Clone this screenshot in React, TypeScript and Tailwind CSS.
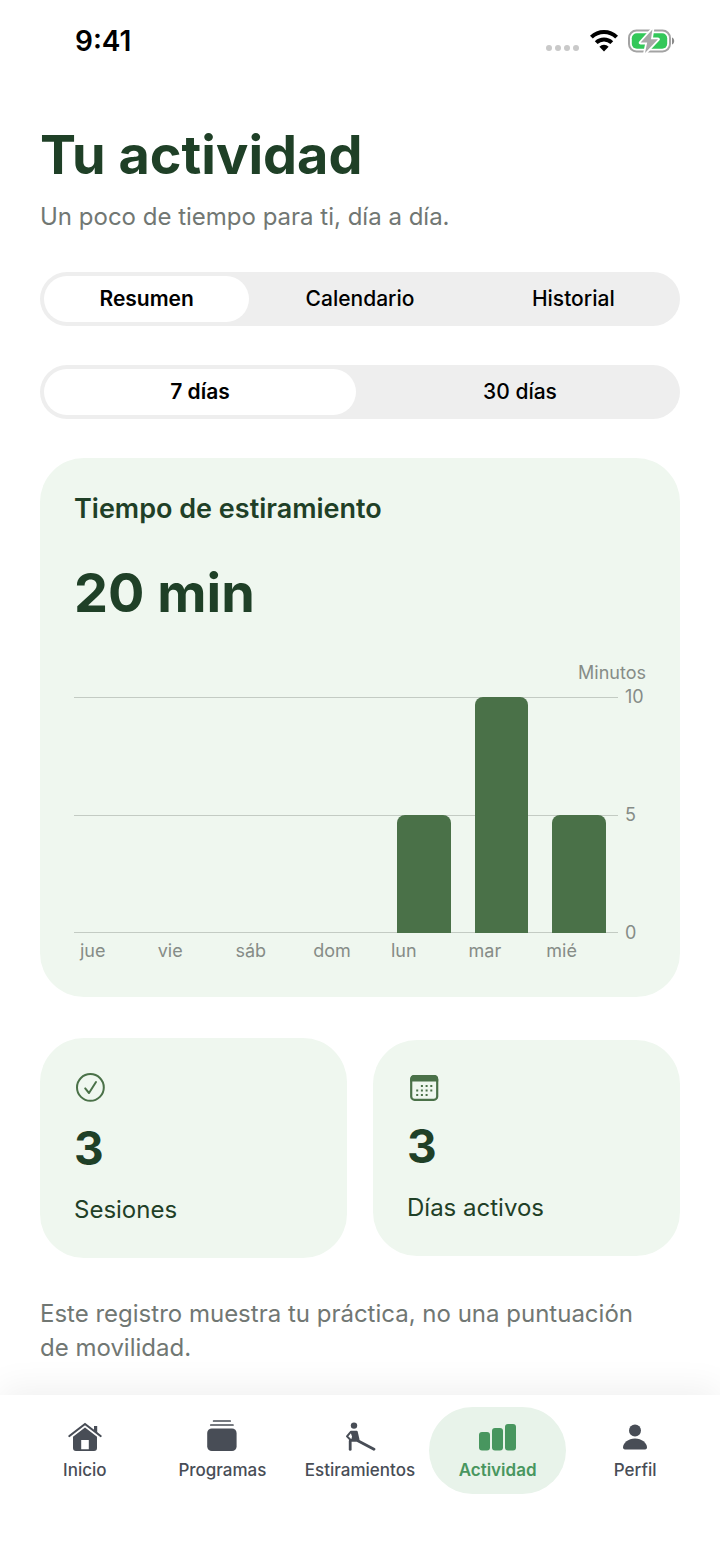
import { useState, type ReactNode } from "react";

const week = [
  { day: "jue", minutes: 0 },
  { day: "vie", minutes: 0 },
  { day: "sáb", minutes: 0 },
  { day: "dom", minutes: 0 },
  { day: "lun", minutes: 5 },
  { day: "mar", minutes: 10 },
  { day: "mié", minutes: 5 },
];

const ticks = [10, 5, 0];
const maxMinutes = 10;

function StatusBar() {
  return (
    <div className="flex h-[82px] items-center justify-between pl-[75px] pr-11">
      <span className="text-[28px] font-semibold leading-8 text-black">9:41</span>
      <div className="flex items-center gap-2">
        <svg width="36" height="24" viewBox="0 0 36 24" fill="#c9c9c9" aria-hidden="true">
          <circle cx="3" cy="19" r="3" />
          <circle cx="12" cy="19" r="3" />
          <circle cx="21" cy="19" r="3" />
          <circle cx="30" cy="19" r="3" />
        </svg>
        <svg width="30" height="24" viewBox="0 0 30 24" fill="none" stroke="#000" aria-hidden="true">
          <path d="M1.4 8.2a17.8 17.8 0 0 1 25.2 0" strokeWidth="4" />
          <path d="M6.2 13.6a11.2 11.2 0 0 1 15.6 0" strokeWidth="4" />
          <path d="M14 22.4l-4.6-4.600a6.400 6.400 0 0 1 9.200 0z" fill="#000" stroke="none" />
        </svg>
        <svg width="48" height="26" viewBox="0 0 48 26" fill="none" aria-hidden="true">
          <rect x="1" y="2.5" width="41" height="21" rx="7.5" stroke="#a3a3a3" strokeWidth="2" />
          <rect x="3.8" y="5.300" width="35.400" height="15.400" rx="5" fill="#33c759" />
          <path d="M44 9.500c1.600.6 2.200 2 2.200 3.500s-.6 2.900-2.200 3.500z" fill="#8a8a8a" />
          <path
            d="M24.400 1.500L12.600 14.600h6.600L17 25 30 11.200h-7z"
            fill="#a8a8a8"
            stroke="#fff"
            strokeWidth="3.600"
            strokeLinejoin="round"
            paintOrder="stroke"
          />
        </svg>
      </div>
    </div>
  );
}

function Segmented({ label, options }: { label: string; options: string[] }) {
  const [selected, setSelected] = useState(options[0]);

  return (
    <div role="group" aria-label={label} className="flex gap-2 rounded-full bg-[#eeeeee] p-1">
      {options.map((option) => (
        <button
          key={option}
          type="button"
          aria-pressed={option === selected}
          onClick={() => setSelected(option)}
          className={`h-[46px] flex-1 basis-0 rounded-full text-[21px] leading-7 text-black ${option === selected ? "bg-white font-semibold" : "font-medium"}`}
        >
          {option}
        </button>
      ))}
    </div>
  );
}

function TimeCard() {
  return (
    <section className="rounded-[44px] bg-[#eff7ef] px-[34px] pb-8 pt-[33px]">
      <h2 className="text-[27px] font-semibold leading-9 text-[#1f4027]">Tiempo de estiramiento</h2>
      <p className="mt-[30px] text-[54px] font-bold leading-[72px] text-[#1f4027]">20 min</p>

      <p className="mt-[30px] text-right text-[18px] leading-7 text-[#868c87]">Minutos</p>
      <div className="mt-[10px] flex gap-[7px]">
        <div className="flex-1">
          <div className="grid h-[236px]">
            <div className="col-start-1 row-start-1 flex flex-col justify-between">
              {ticks.map((tick) => (
                <div key={tick} className="h-px bg-[#c3cbc3]" />
              ))}
            </div>
            <div className="col-start-1 row-start-1 flex items-end">
              {week.map((item) => (
                <div key={item.day} className="flex h-full flex-1 items-end px-3">
                  <div
                    className="w-full rounded-t-lg bg-[#4a7148]"
                    style={{ height: `${(item.minutes / maxMinutes) * 100}%` }}
                  />
                </div>
              ))}
            </div>
          </div>
          <div className="mt-1 flex">
            {week.map((item) => (
              <span key={item.day} className="flex-1 basis-0 pl-[6px] text-[18px] leading-7 text-[#868c87]">
                {item.day}
              </span>
            ))}
          </div>
        </div>
        <div className="-mt-3 flex h-[260px] w-[21px] flex-col justify-between text-[18px] leading-6 text-[#868c87]">
          {ticks.map((tick) => (
            <span key={tick}>{tick}</span>
          ))}
        </div>
      </div>
    </section>
  );
}

function StatCard({ icon, value, label }: { icon: ReactNode; value: number; label: string }) {
  return (
    <section className="flex-1 rounded-[44px] bg-[#eff7ef] px-[34px] py-8">
      {icon}
      <p className="mt-3 text-[46px] font-bold leading-[60px] text-[#1f4027]">{value}</p>
      <p className="mt-4 text-[24px] leading-8 text-[#1f4027]">{label}</p>
    </section>
  );
}

const checkIcon = (
  <svg width="32" height="36" viewBox="0 0 32 36" fill="none" stroke="#4a7148" strokeWidth="2" strokeLinecap="round" strokeLinejoin="round" aria-hidden="true">
    <circle cx="16.4" cy="17.4" r="13.4" />
    <path d="M11.200 18.400l3.800 4.600 7-11" />
  </svg>
);

const calendarIcon = (
  <svg width="32" height="32" viewBox="0 0 32 32" fill="none" aria-hidden="true">
    <rect x="4.2" y="4.2" width="26" height="23.6" rx="3.4" stroke="#4a7148" strokeWidth="2.2" />
    <path d="M3.2 9.5V7a4 4 0 0 1 4-4h20a4 4 0 0 1 4 4v2.5z" fill="#4a7148" />
    <g fill="#4a7148">
      <path d="M13.9 12.9h2v2h-2zM18.6 12.9h2v2h-2zM23.3 12.9h2v2h-2z" />
      <path d="M9.2 17.4h2v2h-2zM13.9 17.4h2v2h-2zM18.6 17.4h2v2h-2zM23.3 17.4h2v2h-2z" />
      <path d="M9.2 21.9h2v2h-2zM13.9 21.9h2v2h-2zM18.6 21.9h2v2h-2z" />
    </g>
  </svg>
);

const navItems = [
  {
    label: "Inicio",
    icon: (
      <svg width="36" height="32" viewBox="0 0 36 32" aria-hidden="true">
        <path d="M2.4 17L18 5 33.6 17" fill="none" stroke="currentColor" strokeWidth="2.2" strokeLinecap="round" strokeLinejoin="round" />
        <path d="M27 7h3.2v7L27 11.600z" fill="currentColor" />
        <path fillRule="evenodd" d="M18 8.600L30 17.800v11.200a3 3 0 0 1-3 3H9a3 3 0 0 1-3-3V17.800zM14.200 21v9.200h7.600V21z" fill="currentColor" />
      </svg>
    ),
  },
  {
    label: "Programas",
    icon: (
      <svg width="36" height="32" viewBox="0 0 36 32" fill="currentColor" aria-hidden="true">
        <rect x="3.2" y="9.4" width="29.4" height="22.6" rx="4.6" />
        <path d="M9.6 2h16.6M6.8 6h22.2" stroke="currentColor" strokeWidth="1.7" strokeLinecap="round" />
      </svg>
    ),
  },
  {
    label: "Estiramientos",
    icon: (
      <svg width="36" height="32" viewBox="0 0 36 32" fill="none" stroke="currentColor" strokeLinecap="round" strokeLinejoin="round" aria-hidden="true">
        <circle cx="12" cy="6.6" r="3.2" fill="currentColor" stroke="none" />
        <path d="M9.600 12.800h5l1.800 7.600-6.200.6 1-3.400z" fill="currentColor" strokeWidth="2.200" />
        <path d="M8.800 12.800L5 17.400l3.400 3.400" strokeWidth="2" />
        <path d="M8.200 22v8.400" strokeWidth="2.800" />
        <path d="M9 21.400h6.400L32 30.200" strokeWidth="2.800" />
      </svg>
    ),
  },
  {
    label: "Actividad",
    icon: (
      <svg width="38" height="32" viewBox="0 0 38 32" fill="currentColor" aria-hidden="true">
        <rect x="0" y="13" width="11" height="18.4" rx="3" />
        <rect x="13" y="9" width="11" height="22.4" rx="3" />
        <rect x="26" y="5" width="11" height="26.4" rx="3" />
      </svg>
    ),
  },
  {
    label: "Perfil",
    icon: (
      <svg width="36" height="32" viewBox="0 0 36 32" fill="currentColor" aria-hidden="true">
        <circle cx="18" cy="11.6" r="6" />
        <path d="M6 28.6c0-4.6 5.2-9 12-9s12 4.400 12 9c0 1.200-.7 1.800-2 1.800H8c-1.300 0-2-.6-2-1.800z" />
      </svg>
    ),
  },
];

function TabBar() {
  return (
    <nav className="mt-auto flex bg-white px-4 pb-16 pt-3 shadow-[0_-8px_32px_rgba(0,0,0,0.06)]">
      {navItems.map((item) => {
        const isActive = item.label === "Actividad";
        return (
          <a
            key={item.label}
            href="#"
            aria-current={isActive ? "page" : undefined}
            className={`flex h-[87px] flex-1 basis-0 flex-col items-center gap-[7px] rounded-full pt-3 text-[17px] leading-6 ${isActive ? "bg-[#e8f3ea] font-semibold text-[#48965f]" : "font-medium text-[#484d56]"}`}
          >
            {item.icon}
            {item.label}
          </a>
        );
      })}
    </nav>
  );
}

export default function App() {
  return (
    <div className="flex min-h-screen flex-col bg-white font-['Inter',sans-serif]">
      <StatusBar />

      <main className="px-10 pb-6">
        <h1 className="mt-[37px] text-[54px] font-bold leading-[72px] text-[#1f4027]">Tu actividad</h1>
        <p className="mt-2 text-[24px] leading-9 text-[#717773]">Un poco de tiempo para ti, día a día.</p>

        <div className="mt-[37px] flex flex-col gap-[39px]">
          <Segmented label="Vista" options={["Resumen", "Calendario", "Historial"]} />
          <Segmented label="Periodo" options={["7 días", "30 días"]} />
          <TimeCard />
        </div>

        <div className="mt-[41px] flex items-center gap-[26px]">
          <StatCard icon={checkIcon} value={3} label="Sesiones" />
          <StatCard icon={calendarIcon} value={3} label="Días activos" />
        </div>

        <p className="mt-[39px] max-w-[600px] text-[24px] leading-[34px] text-[#717773]">
          Este registro muestra tu práctica, no una puntuación de movilidad.
        </p>
      </main>

      <TabBar />
    </div>
  );
}
